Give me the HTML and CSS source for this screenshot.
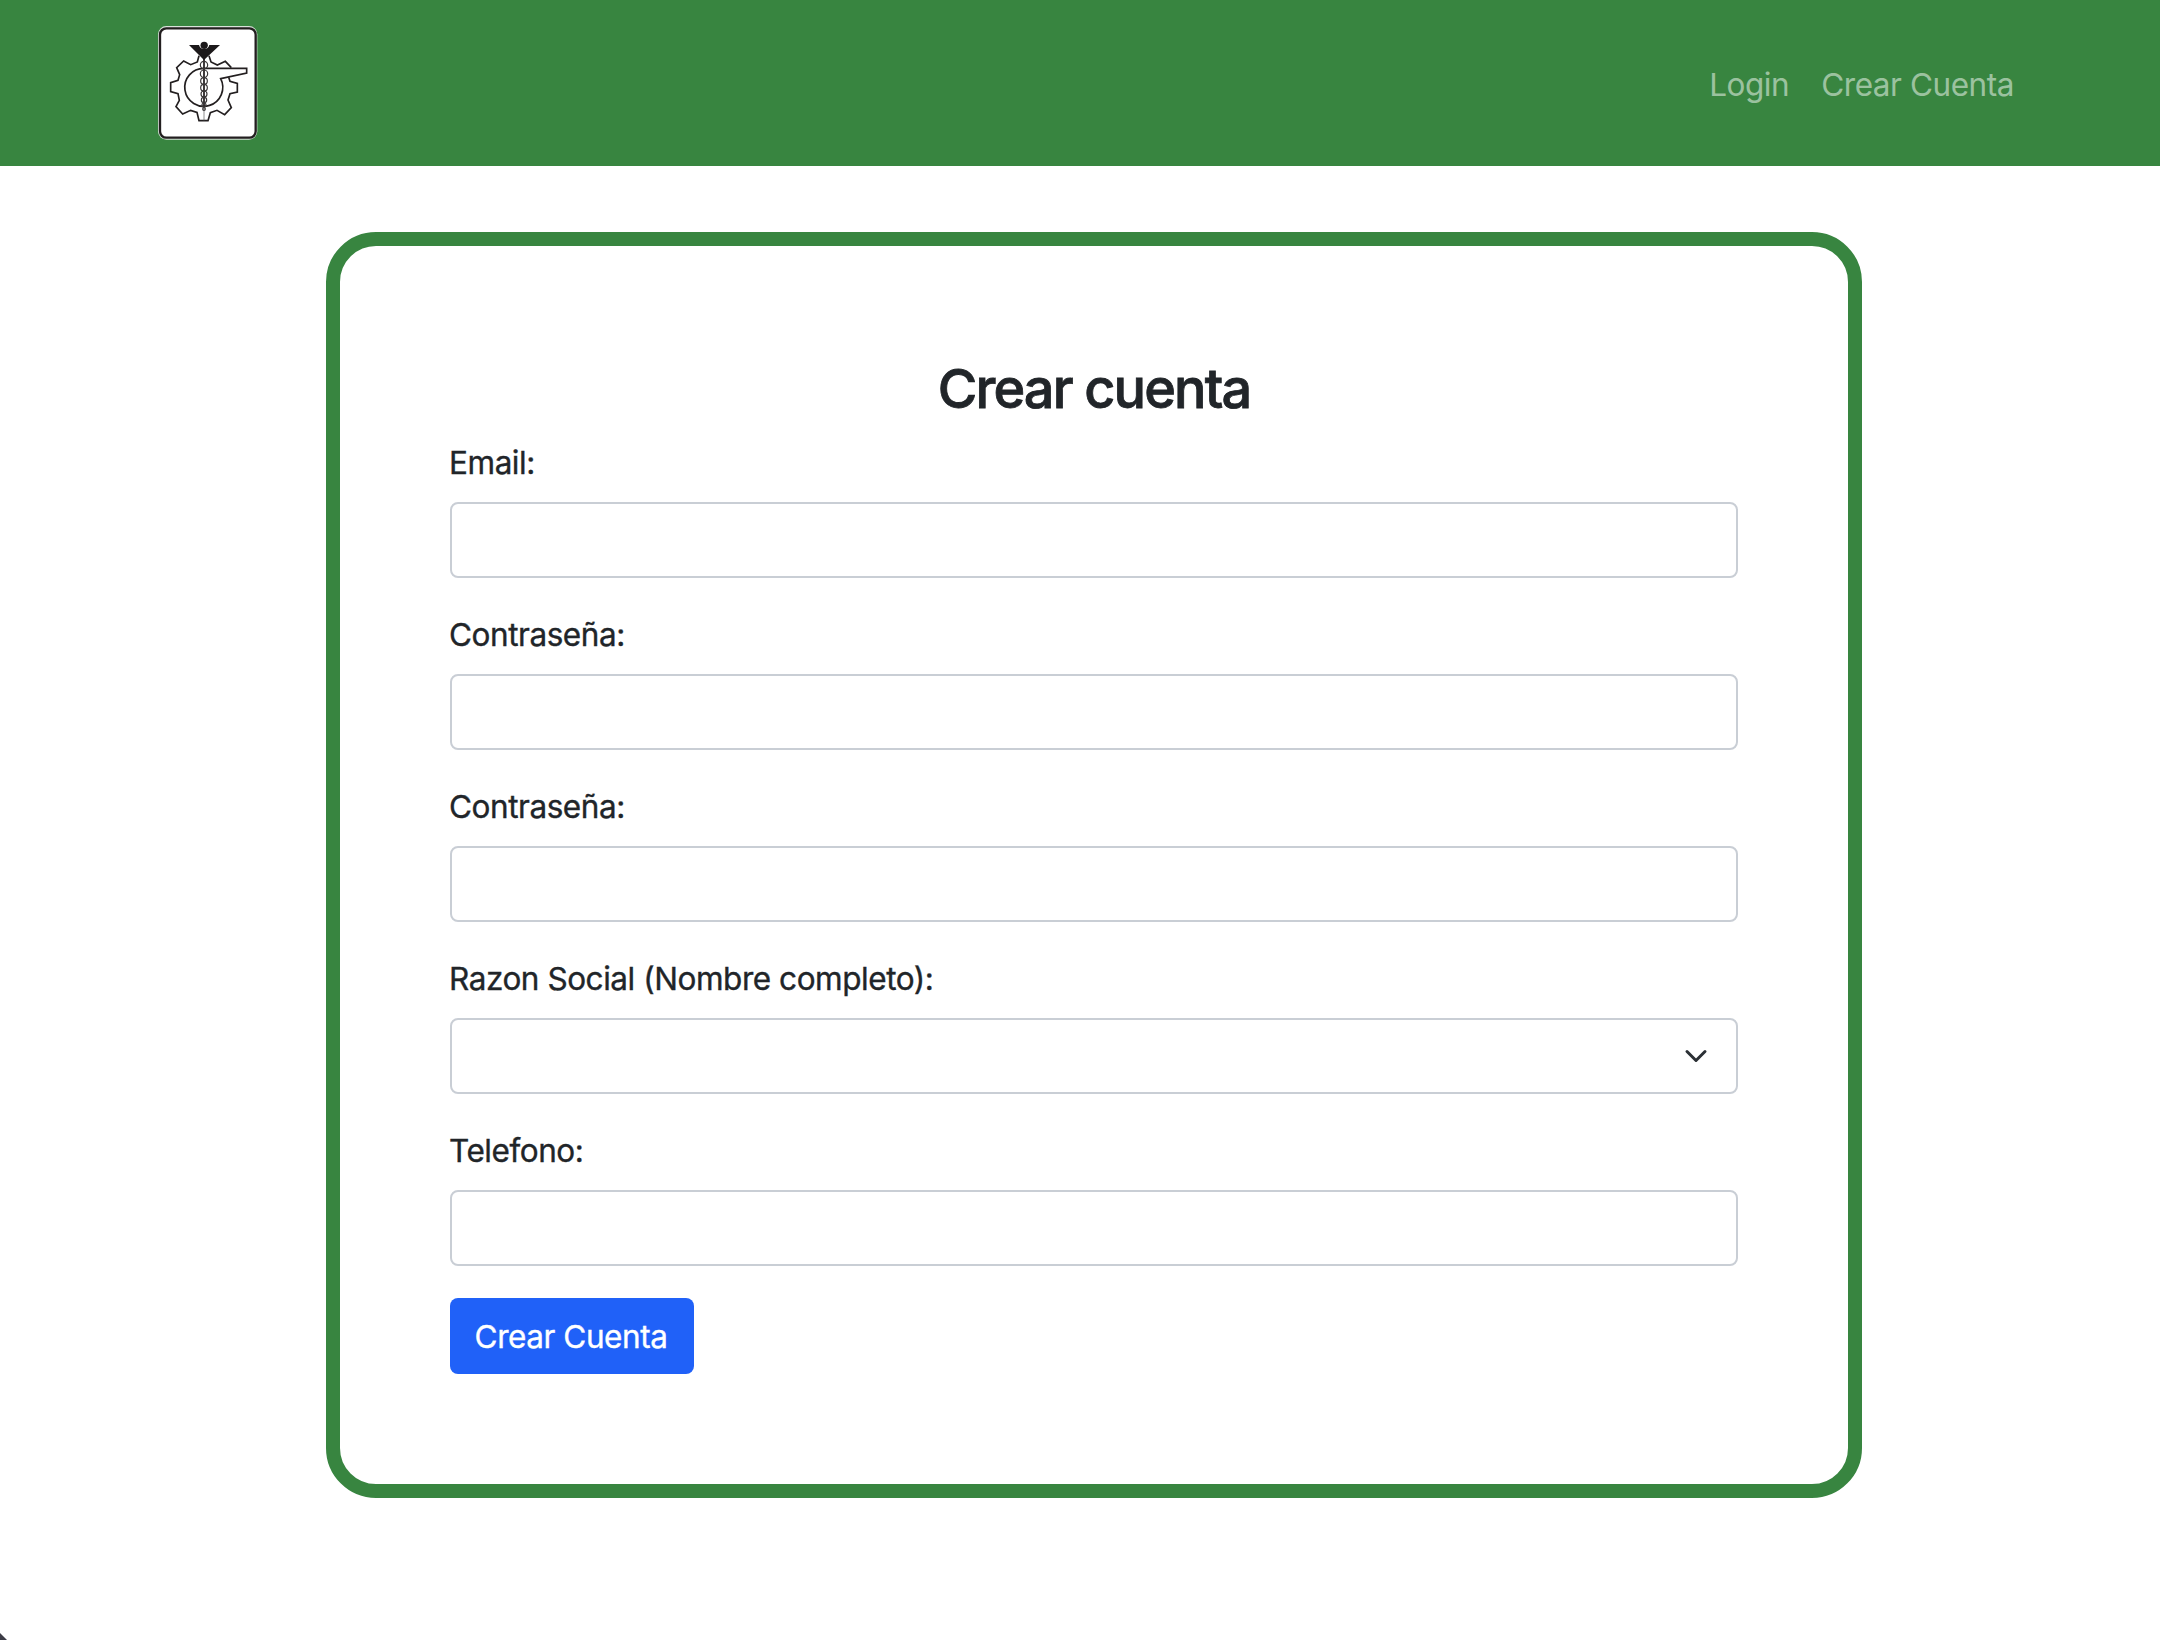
FILE: index.html
```html
<!DOCTYPE html>
<html lang="es">
<head>
<meta charset="utf-8">
<title>Crear cuenta</title>
<link rel="stylesheet" href="styles.css">
</head>
<body>
<header class="navbar">
  <a class="brand" href="#" aria-label="Inicio">
    <svg class="logo" viewBox="30 30 300 342">
      <rect class="logo-edge" x="30" y="30" width="298" height="341" rx="25"/>
      <rect class="logo-frame" x="36" y="37" width="287" height="328" rx="19"/>
      <path class="logo-line" d="M183 119 189 138 208 147 232 136 250 155 M242 184 246 196 268 202V228L246 233 240 252 250 275 230 296 207 283 187 290 180 314H153L147 289 128 283 104 294 84 272 94 253 90 233 68 227V200L90 193 95 176 86 155 107 135 128 146 148 138 153 119"/>
      <path class="logo-line" d="M168 157H296V171L218 188A57 57 0 1 1 168 157"/>
      <path class="logo-thin" d="M168 125V314"/>
      <path class="logo-staff" d="M168 125V272"/>
      <g class="logo-coil">
        <circle cx="168" cy="147" r="11"/><circle cx="168" cy="173" r="11"/>
        <circle cx="168" cy="195" r="10"/><circle cx="168" cy="215" r="10"/>
        <circle cx="168" cy="234" r="9"/><circle cx="168" cy="252" r="8"/>
        <circle cx="168" cy="267" r="6"/><circle cx="168" cy="279" r="4"/>
      </g>
      <path class="logo-fill" d="M123 87H153A16 16 0 0 0 184 87H216L168 132Z"/>
      <circle class="logo-fill" cx="168.500" cy="88" r="11"/>
    </svg>
  </a>
  <nav class="links">
    <a class="link" href="#">Login</a>
    <a class="link" href="#">Crear Cuenta</a>
  </nav>
</header>
<main class="card">
  <h2 class="title">Crear cuenta</h2>
  <form class="form">
    <div class="field"><label class="label" for="email">Email:</label><input class="control" id="email" type="email"></div>
    <div class="field"><label class="label" for="pass1">Contraseña:</label><input class="control" id="pass1" type="password"></div>
    <div class="field"><label class="label" for="pass2">Contraseña:</label><input class="control" id="pass2" type="password"></div>
    <div class="field">
      <label class="label" for="razon">Razon Social (Nombre completo):</label>
      <div class="control select" id="razon">
        <svg class="chevron" viewBox="0 0 16 16"><path d="m2 5 6 6 6-6"/></svg>
      </div>
    </div>
    <div class="field"><label class="label" for="tel">Telefono:</label><input class="control" id="tel" type="tel"></div>
    <button class="button" type="button">Crear Cuenta</button>
  </form>
</main>
<svg class="corner" viewBox="0 0 7 7"><path d="M0 0 7 7H0Z"/></svg>
</body>
</html>
```
FILE: styles.css
```css
* { box-sizing: border-box; }
body {
  margin: 0;
  min-height: 1640px;
  background: #fff;
  color: #212529;
  font: 400 31.5px/48px Inter, "Liberation Sans", sans-serif;
  letter-spacing: -0.45px;
  -webkit-text-stroke: 0.35px currentColor;
}
.navbar {
  display: flex;
  align-items: center;
  justify-content: space-between;
  height: 166px;
  padding: 0 146px 0 158px;
  background: #388540;
}
.brand, .logo { display: block; }
.logo { width: 100px; height: 114px; }
.logo-edge { fill: #d9e2da; }
.logo-frame { fill: #fff; stroke: #231f20; stroke-width: 7; }
.logo-line { fill: none; stroke: #231f20; stroke-width: 5; }
.logo-thin { fill: none; stroke: #555; stroke-width: 2; }
.logo-staff { fill: none; stroke: #231f20; stroke-width: 5; }
.logo-coil { fill: none; stroke: #3a3738; stroke-width: 3.5; }
.logo-fill { fill: #1c191a; }
.links { display: flex; gap: 32px; padding-top: 4px; }
.link { color: rgba(255, 255, 255, .52); text-decoration: none; -webkit-text-stroke: 0; }
.card {
  width: 1536px;
  height: 1266px;
  margin: 66px 0 0 326px;
  padding: 110px;
  border: 14px solid #388540;
  border-radius: 50px;
}
.title {
  margin: 0 0 16px;
  font-size: 54px;
  font-weight: 500;
  line-height: 66px;
  letter-spacing: -1.85px;
  text-align: center;
  -webkit-text-stroke: 0.8px currentColor;
}
.field { margin-bottom: 32px; }
.label { display: block; margin-bottom: 15px; padding-top: 1px; text-indent: -1px; }
.control {
  display: block;
  width: 100%;
  height: 76px;
  padding: 12px 28px;
  border: 2px solid #c9ced5;
  border-radius: 8px;
  background: #fff;
  font: inherit;
}
.select { display: flex; align-items: center; justify-content: flex-end; }
.chevron { width: 24px; height: 24px; fill: none; stroke: #2b3035; stroke-width: 2; stroke-linecap: round; stroke-linejoin: round; }
.button {
  display: block;
  width: 244px;
  height: 76px;
  padding: 2px 2px 0 0;
  border: 0;
  border-radius: 8px;
  background: #2061f8;
  color: #fff;
  font: inherit;
  letter-spacing: inherit;
}
.corner { position: absolute; left: 0; bottom: 0; width: 7px; height: 7px; fill: #3c3c46; }
```
